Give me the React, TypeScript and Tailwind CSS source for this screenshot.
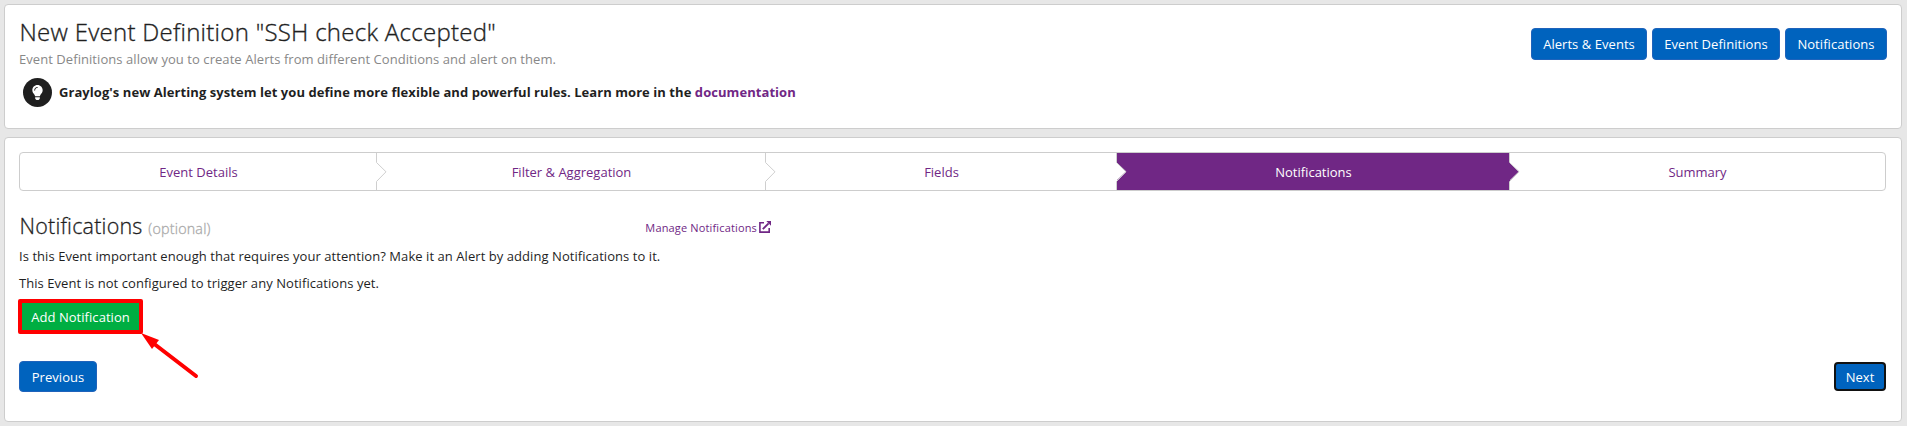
import type { ReactNode } from "react";

type StepProps = { label: string; width: string; active?: boolean; last?: boolean };

const steps: StepProps[] = [
  { label: "Event Details", width: "w-[357px]" },
  { label: "Filter & Aggregation", width: "w-[389px]" },
  { label: "Fields", width: "w-[351px]" },
  { label: "Notifications", width: "w-[393px]", active: true },
  { label: "Summary", width: "w-[375px]", last: true },
];

function Button({ children, className }: { children: ReactNode; className: string }) {
  return (
    <button className={`flex items-center justify-center rounded-[4px] border border-[#1f63bb] bg-[#0063be] pt-[2px] text-[13px] font-medium tracking-[0.05px] whitespace-nowrap text-white ${className}`}>
      {children}
    </button>
  );
}

function Step({ label, width, active, last }: StepProps) {
  return (
    <div className={`relative flex h-[37px] items-center justify-center pt-[2px] text-[13px] ${width} ${active ? "bg-[#702785] text-white" : "text-[#702785]"}`}>
      <span>{label}</span>
      {!last && (
        <svg className="absolute top-0 -right-[10px] z-10" width="11" height="37" viewBox="0 0 11 37">
          <path d="M0 9 L10 18.5 L0 28 Z" fill={active ? "#702785" : "#fff"} />
          <path d="M.5 0 V9.5 L10 18.8 L.5 28.5 V37" fill="none" stroke="#cfcfcf" />
        </svg>
      )}
    </div>
  );
}

export default function App() {
  return (
    <div className="flex h-[426px] w-full flex-col gap-2 bg-[#e7e7e7] pt-1 pr-[5px] pb-1 pl-1 font-['Open_Sans',sans-serif] text-[#1f1f1f]">
      <section className="flex h-[125px] justify-between rounded-[4px] border border-[#cdcdcd] bg-white pr-[14px] pl-[14px]">
        <div>
          <h1 className="mt-[11px] ml-[0.5px] h-8 text-[24px] leading-8 font-light tracking-[0.28px] whitespace-nowrap [-webkit-text-stroke:0.35px_#1f1f1f]">New Event Definition "SSH check Accepted"</h1>
          <p className="mt-[2px] h-[18px] text-[13px] leading-[18px] tracking-[0.06px] whitespace-nowrap text-[#888]">
            Event Definitions allow you to create Alerts from different Conditions and alert on them.
          </p>
          <div className="mt-[10px] ml-[4px] flex items-center gap-[7px]">
            <span className="flex size-[29px] items-center justify-center rounded-full bg-[#1f1f1f]">
              <svg width="11" height="15" viewBox="0 0 352 512" fill="#fff">
                <path d="M96.06 454.35c.01 6.29 1.87 12.45 5.36 17.69l17.09 25.69a31.99 31.99 0 0 0 26.64 14.28h61.71a31.99 31.99 0 0 0 26.64-14.28l17.09-25.69a31.989 31.989 0 0 0 5.36-17.69l.04-38.35H96.01l.05 38.35zM0 176c0 44.37 16.45 84.85 43.56 115.78 16.52 18.85 42.36 58.23 52.21 91.45.04.26.07.52.11.78h160.24c.04-.26.07-.51.11-.78 9.85-33.22 35.69-72.6 52.21-91.45C335.55 260.85 352 220.37 352 176 352 78.61 272.91-.3 175.45 0 73.44.31 0 82.97 0 176zm176-80c-44.11 0-80 35.89-80 80 0 8.84-7.16 16-16 16s-16-7.16-16-16c0-61.76 50.24-112 112-112 8.84 0 16 7.16 16 16s-7.16 16-16 16z" />
              </svg>
            </span>
            <p className="pt-px text-[13px] font-bold tracking-[0.06px] whitespace-nowrap">
              Graylog's new Alerting system let you define more flexible and powerful rules. Learn more in the{" "}
              <a className="text-[#702785]">documentation</a>
            </p>
          </div>
        </div>
        <div className="mt-[23px] flex h-8 gap-[5px]">
          <Button className="w-[116px]">Alerts &amp; Events</Button>
          <Button className="w-[128px]">Event Definitions</Button>
          <Button className="w-[102px]">Notifications</Button>
        </div>
      </section>

      <section className="flex h-[285px] flex-col rounded-[4px] border border-[#cdcdcd] bg-white pt-[14px] pr-[15px] pl-[14px]">
        <nav className="flex h-[39px] w-[1867px] shrink-0 rounded-[4px] border border-[#cdcdcd]">
          {steps.map((step) => (
            <Step key={step.label} {...step} />
          ))}
        </nav>
        <div className="mt-[20px] flex h-8 w-[752px] items-center justify-between">
          <h2 className="ml-[0.5px] text-[21.5px] leading-8 font-light tracking-[0.2px] [-webkit-text-stroke:0.3px]">
            Notifications <small className="text-[14.3px] text-[#aaa]">(optional)</small>
          </h2>
          <a className="flex items-center gap-[2px] text-[11px] tracking-[0.15px] text-[#702785]">
            <span className="pt-[2px]">Manage Notifications</span>
            <svg width="12" height="12" viewBox="0 0 12 12" fill="none" stroke="#702785">
              <path d="M5 1.75H.9v9.35h9.3V7" strokeWidth="1.6" />
              <path d="M3.8 8.2 9.6 2.4" strokeWidth="1.9" />
              <path d="M7.3 0H12v4.7z" fill="#702785" stroke="none" />
            </svg>
          </a>
        </div>
        <p className="mt-[4px] h-[27px] text-[13px] leading-[18px] tracking-[0.06px]">
          Is this Event important enough that requires your attention? Make it an Alert by adding Notifications to it.
        </p>
        <p className="h-[27px] text-[13px] leading-[18px] tracking-[0.06px]">This Event is not configured to trigger any Notifications yet.</p>
        <div className="relative -mt-[2px] -ml-[1px] h-[35px] w-[125px] shrink-0">
          <button className="flex h-full w-full items-center justify-center rounded-[2px] border-4 border-[#ff0000] bg-[#00ae42] pt-[2px] text-[13px] font-medium tracking-[0.05px] whitespace-nowrap text-white">
            Add Notification
          </button>
          <svg className="absolute top-[34px] left-[123px]" width="60" height="48" viewBox="0 0 60 48">
            <path d="M0 0 18 7 11 16Z" fill="#f00" />
            <path d="M12 10 55 43" stroke="#f00" strokeWidth="4" strokeLinecap="round" />
          </svg>
        </div>
        <div className="mt-[27px] flex items-center justify-between">
          <Button className="h-[31px] w-[78px]">Previous</Button>
          <Button className="h-[29px] w-[52px] border-2 border-[#111]">Next</Button>
        </div>
      </section>
    </div>
  );
}
